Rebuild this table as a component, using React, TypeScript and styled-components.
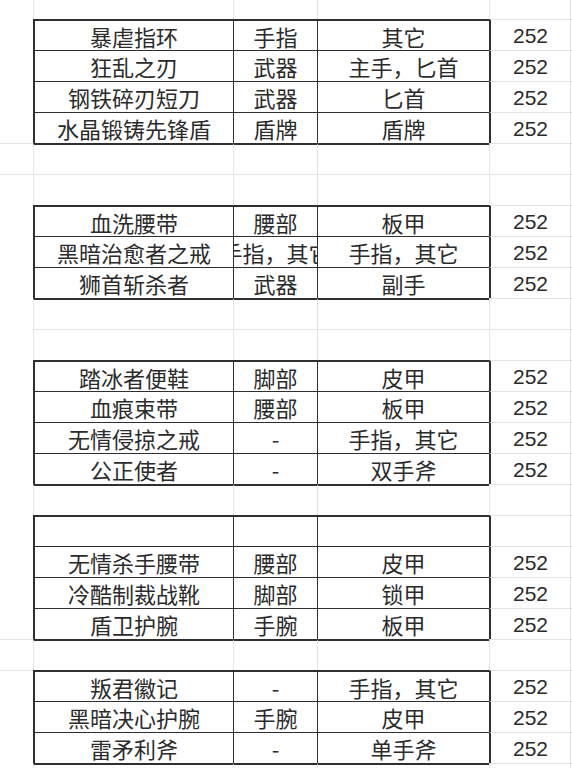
import { FunctionComponent } from "react";
import styled, { createGlobalStyle } from "styled-components";

interface Item {
  name: string;
  slot: string;
  kind: string;
  value: string;
}

interface RowData extends Item {
  boxed: boolean;
  first: boolean;
  under: boolean;
  mark: boolean;
}

const groups: { items: Item[]; gap: number }[] = [
  {
    items: [
      { name: "暴虐指环", slot: "手指", kind: "其它", value: "252" },
      { name: "狂乱之刃", slot: "武器", kind: "主手，匕首", value: "252" },
      { name: "钢铁碎刃短刀", slot: "武器", kind: "匕首", value: "252" },
      { name: "水晶锻铸先锋盾", slot: "盾牌", kind: "盾牌", value: "252" },
    ],
    gap: 2,
  },
  {
    items: [
      { name: "血洗腰带", slot: "腰部", kind: "板甲", value: "252" },
      { name: "黑暗治愈者之戒", slot: "手指，其它", kind: "手指，其它", value: "252" },
      { name: "狮首斩杀者", slot: "武器", kind: "副手", value: "252" },
    ],
    gap: 2,
  },
  {
    items: [
      { name: "踏冰者便鞋", slot: "脚部", kind: "皮甲", value: "252" },
      { name: "血痕束带", slot: "腰部", kind: "板甲", value: "252" },
      { name: "无情侵掠之戒", slot: "-", kind: "手指，其它", value: "252" },
      { name: "公正使者", slot: "-", kind: "双手斧", value: "252" },
    ],
    gap: 1,
  },
  {
    items: [
      { name: "", slot: "", kind: "", value: "" },
      { name: "无情杀手腰带", slot: "腰部", kind: "皮甲", value: "252" },
      { name: "冷酷制裁战靴", slot: "脚部", kind: "锁甲", value: "252" },
      { name: "盾卫护腕", slot: "手腕", kind: "板甲", value: "252" },
    ],
    gap: 1,
  },
  {
    items: [
      { name: "叛君徽记", slot: "-", kind: "手指，其它", value: "252" },
      { name: "黑暗决心护腕", slot: "手腕", kind: "皮甲", value: "252" },
      { name: "雷矛利斧", slot: "-", kind: "单手斧", value: "252" },
    ],
    gap: 0,
  },
];

// rows whose left margin cell still shows a grid line
const markedRows = [4, 5, 20, 21];

const buildRows = (): RowData[] => {
  const rows: RowData[] = [];
  const blank = { name: "", slot: "", kind: "", value: "", boxed: false, first: false, mark: false };
  groups.forEach((g) => {
    g.items.forEach((it, i) => {
      rows.push({ ...it, boxed: true, first: i === 0, under: false, mark: false });
    });
    for (let i = 0; i < g.gap; i++) {
      rows.push({ ...blank, under: i === 0 });
    }
  });
  return rows.map((r, i) => ({ ...r, mark: markedRows.includes(i) }));
};

const GlobalStyle = createGlobalStyle`
  html, body {
    margin: 0;
    padding: 0;
    background: #ffffff;
  }
  body {
    font-family: "Noto Sans CJK SC", "Liberation Sans", sans-serif;
    color: #2b2b2b;
  }
`;

const LIGHT = "#e4e4e4";
const DARK = "#2f2f2f";

const Sheet = styled.div`
  width: 572px;
  height: 768px;
  overflow: hidden;
  display: flex;
  flex-direction: column;
`;

const Row = styled.div<{ $h: number }>`
  display: grid;
  grid-template-columns: 33px 200px 84px 172px 81px 2px;
  height: ${({ $h }) => $h}px;
  flex-shrink: 0;
`;

const Margin = styled.div<{ $mark?: boolean }>`
  border-top: 1px solid ${({ $mark }) => ($mark ? LIGHT : "transparent")};
`;

const Cell = styled.div<{
  $boxed?: boolean;
  $first?: boolean;
  $under?: boolean;
  $lead?: boolean;
}>`
  box-sizing: border-box;
  min-width: 0;
  overflow-x: clip;
  overflow-y: visible;
  display: flex;
  align-items: center;
  justify-content: center;
  white-space: nowrap;
  font-size: 22px;
  line-height: 26px;
  border-top: ${({ $boxed, $first, $under }) =>
    $boxed
      ? `${$first ? 2 : 1}px solid ${DARK}`
      : $under
      ? `2px solid ${DARK}`
      : `1px solid ${LIGHT}`};
  border-left: ${({ $boxed, $lead }) =>
    $boxed ? `${$lead ? 2 : 1}px solid ${DARK}` : `1px solid ${LIGHT}`};
`;

const ValueCell = styled.div<{ $edge?: boolean }>`
  box-sizing: border-box;
  display: flex;
  align-items: center;
  justify-content: center;
  font-family: "Liberation Sans", Arial, sans-serif;
  font-size: 21px;
  line-height: 24px;
  padding-top: 2px;
  color: #2a2a2a;
  border-top: 1px solid ${LIGHT};
  border-left: ${({ $edge }) => ($edge ? `2px solid ${DARK}` : `1px solid ${LIGHT}`)};
`;

const EndCell = styled.div`
  border-top: 1px solid ${LIGHT};
  border-left: 1px solid ${LIGHT};
`;

const SheetRow: FunctionComponent<{ row: RowData; h: number }> = ({ row, h }) => (
  <Row $h={h}>
    <Margin $mark={row.mark} />
    <Cell $boxed={row.boxed} $first={row.first} $under={row.under} $lead>
      <span>{row.name}</span>
    </Cell>
    <Cell $boxed={row.boxed} $first={row.first} $under={row.under}>
      <span>{row.slot}</span>
    </Cell>
    <Cell $boxed={row.boxed} $first={row.first} $under={row.under}>
      <span>{row.kind}</span>
    </Cell>
    <ValueCell $edge={row.boxed}>{row.value}</ValueCell>
    <EndCell />
  </Row>
);

const TopRow = styled(Row)`
  & > div + div {
    border-left: 1px solid ${LIGHT};
  }
`;

const App: FunctionComponent = () => {
  const rows = buildRows();
  return (
    <>
      <GlobalStyle />
      <Sheet>
        <TopRow $h={19}>
          <div />
          <div />
          <div />
          <div />
          <div />
          <div />
        </TopRow>
        {rows.map((r, i) => (
          <SheetRow key={i} row={r} h={31} />
        ))}
        <SheetRow
          row={{ name: "", slot: "", kind: "", value: "", boxed: false, first: false, under: true, mark: false }}
          h={10}
        />
      </Sheet>
    </>
  );
};

export default App;
